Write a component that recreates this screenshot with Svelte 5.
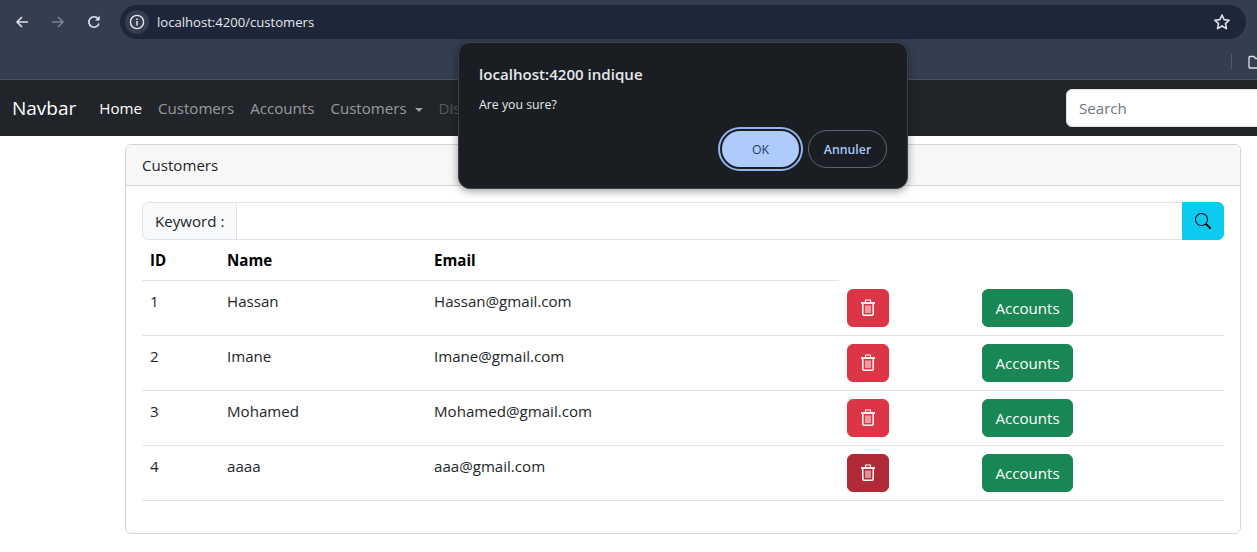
<script>
  const customers = [
    { id: 1, name: "Hassan", email: "Hassan@gmail.com" },
    { id: 2, name: "Imane", email: "Imane@gmail.com" },
    { id: 3, name: "Mohamed", email: "Mohamed@gmail.com" },
    { id: 4, name: "aaaa", email: "aaa@gmail.com" }
  ];
  let keyword = "";
</script>

<div class="page">
  <header class="browser">
    <div class="toolbar">
      <button class="nav-btn" aria-label="Back">
        <svg viewBox="0 0 16 16" width="16" height="16"><path d="M14 8H3M8 3L3 8l5 5" fill="none" stroke="#dfe3ea" stroke-width="1.6"/></svg>
      </button>
      <button class="nav-btn" aria-label="Forward">
        <svg viewBox="0 0 16 16" width="16" height="16"><path d="M2 8h11M8 3l5 5-5 5" fill="none" stroke="#7a8292" stroke-width="1.6"/></svg>
      </button>
      <button class="nav-btn" aria-label="Reload">
        <svg viewBox="0 0 16 16" width="16" height="16"><path d="M13 9.5A5.2 5.2 0 1 1 12 4.6" fill="none" stroke="#dfe3ea" stroke-width="1.6"/><path d="M13.6 1.8v4.6H9z" fill="#dfe3ea"/></svg>
      </button>
      <div class="url-bar">
        <span class="info">
          <svg viewBox="0 0 16 16" width="16" height="16"><circle cx="8" cy="8" r="6.6" fill="none" stroke="#e6e9ef" stroke-width="1.4"/><path d="M8 7v4.4M8 4.4v1.5" stroke="#e6e9ef" stroke-width="1.5"/></svg>
        </span>
        <span class="url">localhost:4200/customers</span>
        <svg class="star" viewBox="0 0 16 16" width="18" height="18"><path d="M8 1.8l1.9 4.1 4.5.5-3.3 3 .9 4.5L8 11.6l-4 2.3.9-4.5-3.3-3 4.5-.5z" fill="none" stroke="#dfe3ea" stroke-width="1.4" stroke-linejoin="round"/></svg>
      </div>
    </div>
    <div class="bookmarks">
      <span class="sep"></span>
      <svg class="folder" viewBox="0 0 16 14" width="16" height="14"><path d="M1 2.5A1 1 0 0 1 2 1.5h4l1.5 2H14a1 1 0 0 1 1 1V12a1 1 0 0 1-1 1H2a1 1 0 0 1-1-1z" fill="none" stroke="#dfe3ea" stroke-width="1.3"/></svg>
    </div>
  </header>

  <nav class="navbar">
    <span class="brand">Navbar</span>
    <ul class="links">
      <li class="active">Home</li>
      <li>Customers</li>
      <li>Accounts</li>
      <li>Customers <i class="caret"></i></li>
      <li class="disabled">Disabled</li>
    </ul>
    <div class="search">
      <input type="text" placeholder="Search" />
    </div>
  </nav>

  <main class="content">
    <section class="card">
      <div class="card-header">Customers</div>
      <div class="card-body">
        <form class="input-group" on:submit|preventDefault>
          <label for="kw">Keyword :</label>
          <input id="kw" type="text" bind:value={keyword} />
          <button class="btn-search" aria-label="Search">
            <svg viewBox="0 0 16 16" width="16" height="16"><path d="M11.742 10.344a6.5 6.5 0 1 0-1.397 1.398h-.001c.03.04.062.078.098.115l3.85 3.85a1 1 0 0 0 1.415-1.414l-3.85-3.85a1.007 1.007 0 0 0-.115-.1zM12 6.5a5.5 5.5 0 1 1-11 0 5.5 5.5 0 0 1 11 0z"/></svg>
          </button>
        </form>
        <table>
          <colgroup>
            <col class="c-id" /><col class="c-name" /><col class="c-email" /><col class="c-del" /><col />
          </colgroup>
          <thead>
            <tr><th>ID</th><th>Name</th><th>Email</th></tr>
          </thead>
          <tbody>
            {#each customers as c}
              <tr>
                <td>{c.id}</td>
                <td>{c.name}</td>
                <td>{c.email}</td>
                <td>
                  <button class="btn btn-danger" class:hover={c.id === 4} aria-label="Delete">
                    <svg viewBox="0 0 14 17" width="14" height="17" fill="none" stroke="currentColor"><path d="M4.5 3.5v-2.5h5v2.5" stroke-width="1.1"/><path d="M0 4h14" stroke-width="1.8"/><path d="M1.8 4.5v10.5a1.2 1.2 0 0 0 1.2 1.2h8a1.2 1.2 0 0 0 1.2-1.2v-10.5" stroke-width="1.5"/><path d="M5 6.5v7.5M9 6.5v7.5M7 6.5v7.5" stroke-width="1"/></svg>
                  </button>
                </td>
                <td><button class="btn btn-success">Accounts</button></td>
              </tr>
            {/each}
          </tbody>
        </table>
      </div>
    </section>
  </main>

  <div class="dialog" role="alertdialog">
    <h2>localhost:4200 indique</h2>
    <p>Are you sure?</p>
    <div class="actions">
      <button class="ok">OK</button>
      <button class="cancel">Annuler</button>
    </div>
  </div>
</div>

<style>
  :global(body) {
    margin: 0;
    background: #fff;
  }

  .page {
    position: relative;
    height: 552px;
    overflow: hidden;
    font-family: "Open Sans", "Noto Sans", sans-serif;
    font-size: 15.1px;
    line-height: 24px;
    color: #212529;
  }

  button {
    font-family: inherit;
    cursor: pointer;
  }

  /* browser chrome */
  .browser {
    background: #343e50;
    height: 80px;
    box-sizing: border-box;
    border-bottom: 1px solid #4a505c;
  }

  .toolbar {
    display: flex;
    align-items: center;
    height: 44px;
    padding: 0 11px 0 4px;
    box-sizing: border-box;
  }

  .nav-btn {
    width: 36px;
    height: 34px;
    flex: none;
    background: none;
    border: none;
    padding: 0;
    display: flex;
    align-items: center;
    justify-content: center;
  }

  .url-bar {
    flex: 1;
    height: 34px;
    margin-left: 8px;
    border-radius: 17px;
    background: #1e2739;
    display: flex;
    align-items: center;
    padding: 0 15px 0 5px;
    color: #e6e9ef;
  }

  .info {
    width: 24px;
    height: 24px;
    border-radius: 50%;
    background: #343e50;
    display: flex;
    align-items: center;
    justify-content: center;
  }

  .url {
    margin-left: 8px;
    font-size: 13.1px;
    flex: 1;
  }

  .bookmarks {
    height: 35px;
    display: flex;
    align-items: center;
    padding-left: 1231px;
    overflow: hidden;
  }

  .sep {
    width: 1px;
    height: 15px;
    background: #525b6b;
    flex: none;
  }

  .folder {
    flex: none;
    margin-left: 16px;
  }

  /* app navbar */
  .navbar {
    height: 56px;
    background: #212529;
    display: flex;
    align-items: center;
    padding-left: 12px;
  }

  .brand {
    color: #fff;
    font-size: 19px;
    margin-right: 15px;
  }

  .links {
    display: flex;
    list-style: none;
    margin: 0;
    padding: 0;
    color: rgba(255, 255, 255, 0.55);
  }

  .links li {
    padding: 0 8px;
  }

  .links .active {
    color: #fff;
  }

  .links .disabled {
    color: rgba(255, 255, 255, 0.25);
  }

  .caret {
    display: inline-block;
    margin-left: 4px;
    vertical-align: 2px;
    border-top: 4.8px solid;
    border-left: 4.8px solid transparent;
    border-right: 4.8px solid transparent;
  }

  .search {
    margin-left: auto;
    flex: 0 0 191px;
    overflow: hidden;
  }

  .search input {
    width: 220px;
    height: 38px;
    box-sizing: border-box;
    border: 1px solid #dee2e6;
    border-radius: 6px;
    padding: 6px 12px;
    font: inherit;
    display: block;
    outline: none;
  }

  .search input::placeholder {
    color: #6c757d;
  }

  /* content */
  .content {
    padding: 8px 16px 0 125px;
  }

  .card {
    border: 1px solid #d3d4d5;
    border-radius: 6px;
  }

  .card-header {
    padding: 8px 16px;
    background: #f7f7f7;
    border-bottom: 1px solid #d3d4d5;
    border-radius: 5px 5px 0 0;
  }

  .card-body {
    padding: 16px;
  }

  .input-group {
    display: flex;
    height: 38px;
  }

  .input-group label {
    padding: 6px 12px;
    background: #f8f9fa;
    border: 1px solid #dee2e6;
    border-radius: 6px 0 0 6px;
    white-space: nowrap;
  }

  .input-group input {
    flex: 1;
    min-width: 0;
    margin-left: -1px;
    border: 1px solid #dee2e6;
    outline: none;
    padding: 6px 12px;
    font: inherit;
  }

  .btn-search {
    flex: 0 0 42px;
    margin-left: -1px;
    background: #0dcaf0;
    border: 1px solid #0dcaf0;
    border-radius: 0 6px 6px 0;
    padding: 0;
    display: flex;
    align-items: center;
    justify-content: center;
  }

  table {
    width: 100%;
    table-layout: fixed;
    border-collapse: collapse;
    margin-bottom: 16px;
  }

  .c-id { width: 77px; }
  .c-name { width: 207px; }
  .c-email { width: 413px; }
  .c-del { width: 135px; }

  th, td {
    padding: 8px;
    text-align: left;
    vertical-align: top;
    border-bottom: 1px solid #dee2e6;
  }

  th {
    color: #000;
    font-weight: 700;
  }

  td {
    color: #212529;
  }

  .btn {
    display: block;
    height: 38px;
    box-sizing: border-box;
    padding: 0 12px;
    border-radius: 6px;
    border: 1px solid;
    color: #fff;
    font-size: 15.1px;
  }

  .btn-danger {
    width: 42px;
    background: #dc3545;
    border-color: #dc3545;
    display: flex;
    align-items: center;
    justify-content: center;
    padding: 0;
  }

  .btn-danger.hover {
    background: #b02a37;
    border-color: #b02a37;
  }

  .btn-success {
    background: #198754;
    border-color: #198754;
    width: 91px;
    padding: 0;
  }

  /* alert */
  .dialog {
    position: absolute;
    left: 458px;
    top: 42px;
    width: 450px;
    height: 147px;
    box-sizing: border-box;
    padding: 19px 20px;
    background: #1a1d22;
    border: 1px solid #3c3f45;
    border-radius: 12px;
    box-shadow: 0 2px 8px rgba(0, 0, 0, 0.4);
    color: #e6e8ec;
  }

  .dialog h2 {
    margin: 0;
    font-size: 15.1px;
    line-height: 24px;
    font-weight: 600;
  }

  .dialog p {
    margin: 9px 0 0;
    font-size: 12.3px;
    line-height: 20px;
  }

  .actions {
    position: absolute;
    right: 20px;
    top: 86px;
    display: flex;
    align-items: center;
    gap: 7px;
  }

  .ok {
    width: 81px;
    height: 40px;
    box-sizing: border-box;
    border-radius: 20px;
    background: #afcbfb;
    border: 2px solid #1a1d22;
    box-shadow: 0 0 0 2px #93b4ee;
    color: #1f3a66;
    font-size: 12.3px;
    font-weight: 500;
    padding: 0;
  }

  .cancel {
    width: 79px;
    height: 38px;
    box-sizing: border-box;
    border-radius: 19px;
    background: none;
    border: 1px solid #5f636b;
    color: #a8c7fa;
    font-size: 12.3px;
    font-weight: 600;
    padding: 0;
  }
</style>
